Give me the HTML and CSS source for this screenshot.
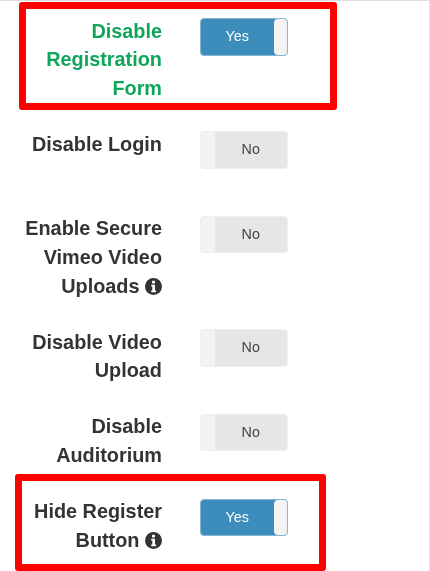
FILE: index.html
```html
<!DOCTYPE html>
<html lang="en">
<head>
<meta charset="utf-8">
<title>Settings</title>
<link rel="stylesheet" href="styles.css">
</head>
<body>
<main class="form">
  <div class="row">
    <div class="label label-green">Disable Registration Form</div>
    <div class="toggle on"><span class="state">Yes</span><span class="handle"></span></div>
  </div>
  <div class="row">
    <div class="label">Disable Login</div>
    <div class="toggle off"><span class="handle"></span><span class="state">No</span></div>
  </div>
  <div class="row">
    <div class="label">Enable Secure Vimeo Video Uploads <svg class="info" viewBox="0 0 17 17" aria-hidden="true"><circle cx="8.5" cy="8.5" r="8.5" fill="#333"/><rect x="7" y="2.8" width="3" height="2.6" rx=".4" fill="#fff"/><path d="M6.2 6.8h3.8v5.6h1v1.8H6.2v-1.8h1.1V8.6H6.2z" fill="#fff"/></svg></div>
    <div class="toggle off"><span class="handle"></span><span class="state">No</span></div>
  </div>
  <div class="row">
    <div class="label">Disable Video Upload</div>
    <div class="toggle off"><span class="handle"></span><span class="state">No</span></div>
  </div>
  <div class="row">
    <div class="label">Disable Auditorium</div>
    <div class="toggle off"><span class="handle"></span><span class="state">No</span></div>
  </div>
  <div class="row">
    <div class="label">Hide Register Button <svg class="info" viewBox="0 0 17 17" aria-hidden="true"><circle cx="8.5" cy="8.5" r="8.5" fill="#333"/><rect x="7" y="2.8" width="3" height="2.6" rx=".4" fill="#fff"/><path d="M6.2 6.8h3.8v5.6h1v1.8H6.2v-1.8h1.1V8.6H6.2z" fill="#fff"/></svg></div>
    <div class="toggle on"><span class="state">Yes</span><span class="handle"></span></div>
  </div>
</main>
<div class="mark mark-top"></div>
<div class="mark mark-bottom"></div>
</body>
</html>
```
FILE: styles.css
```css
html, body {
  margin: 0;
  height: 571px;
  overflow: hidden;
  background: #fff;
}
body {
  position: relative;
  box-sizing: border-box;
  border-top: 1px solid #dedede;
  border-right: 1px solid #e6e6e6;
  font-family: "Liberation Sans", Arial, sans-serif;
  filter: blur(0.45px);
}
.form {
  display: flex;
  flex-direction: column;
  padding: 15.5px 0 0 22px;
}
.row {
  display: flex;
  align-items: flex-start;
  gap: 38px;
  min-height: 57px;
  margin-bottom: 27.6px;
}
.label {
  width: 140px;
  text-align: right;
  font-size: 19.85px;
  font-weight: 700;
  line-height: 28.57px;
  color: #333;
}
.label-green {
  color: #0fa65a;
}
.info {
  width: 17px;
  height: 17px;
  vertical-align: -2px;
}
.toggle {
  display: flex;
  box-sizing: border-box;
  width: 88px;
  height: 37.5px;
  margin-top: 1.5px;
  border: 1px solid;
  border-radius: 4px;
  overflow: hidden;
  font-size: 14.3px;
}
.state {
  flex: 1;
  text-align: center;
}
.handle {
  width: 13.5px;
  background: #f3f3f3;
}
.on {
  background: #3c8dbc;
  border-color: #86b6d3;
  color: #fff;
}
.on .state {
  line-height: 34.5px;
}
.on .handle {
  border-radius: 4px 0 0 4px;
}
.off {
  background: #e6e6e6;
  border-color: #efefef;
  color: #444;
}
.off .state {
  line-height: 34px;
}
.mark {
  position: absolute;
  box-sizing: border-box;
  border: 7px solid #ff0000;
  border-radius: 3px;
}
.mark-top {
  left: 19px;
  top: 1px;
  width: 318px;
  height: 108px;
}
.mark-bottom {
  left: 15px;
  top: 473px;
  width: 311px;
  height: 97px;
}
```
